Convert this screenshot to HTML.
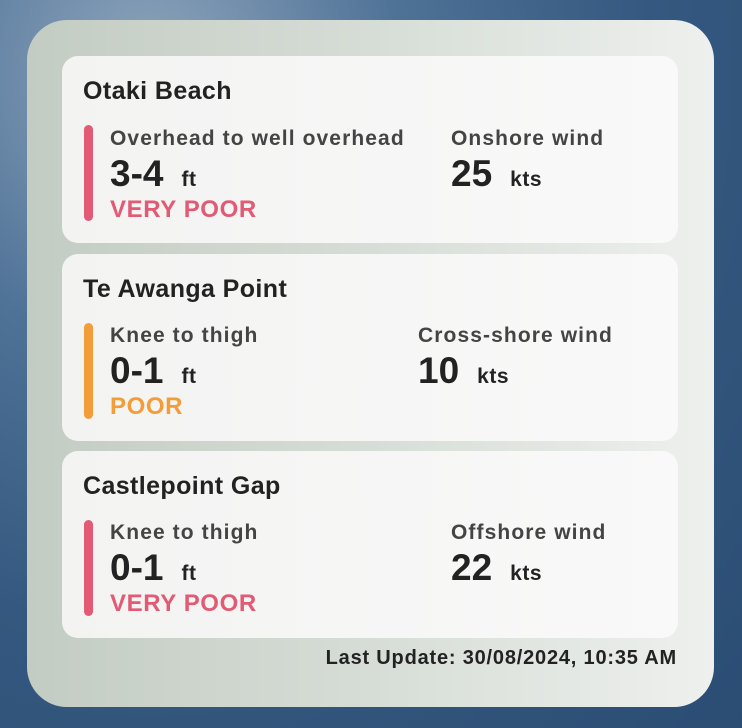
<!DOCTYPE html>
<html><head><meta charset="utf-8"><style>
*{margin:0;padding:0;box-sizing:border-box}
body{width:742px;height:728px;overflow:hidden;position:relative;font-family:"Liberation Sans",sans-serif;
background:radial-gradient(ellipse at 20% 10%,#8fa6bd 0,#4f7297 30%,#34587f 60%,#2b4d74 100%);}
.w{position:absolute;left:27px;top:20px;width:687px;height:687px;border-radius:40px;
background:linear-gradient(90deg,#c3ccc3 0%,#d6ddd6 50%,#eef0ee 100%);}
.c{position:absolute;left:35px;width:616px;height:187px;border-radius:16px;background:linear-gradient(90deg,#f3f3f2,#f9f9f9)}
.t{position:absolute;left:21px;top:21px;font-size:25px;font-weight:bold;color:#222;letter-spacing:0.4px;white-space:nowrap}
.bar{position:absolute;left:22px;top:69px;width:9px;height:96px;border-radius:5px}
.l{position:absolute;font-size:21px;font-weight:bold;color:#444;letter-spacing:1.1px;white-space:nowrap}
.v{position:absolute;font-size:37px;font-weight:bold;color:#222;white-space:nowrap}
.v span{font-size:21px;margin-left:18px;letter-spacing:0.5px}
.r{position:absolute;font-size:24px;font-weight:bold;letter-spacing:0.6px;white-space:nowrap}
.lu{position:absolute;right:37px;top:627px;font-size:20px;font-weight:bold;color:#222;letter-spacing:0.8px;white-space:nowrap}
</style></head><body>
<div class="w">
 <div class="c" style="top:36px">
  <div class="t">Otaki Beach</div>
  <div class="bar" style="background:#e25a73"></div>
  <div class="l" style="left:48px;top:71px">Overhead to well overhead</div>
  <div class="v" style="left:48px;top:97px">3-4<span>ft</span></div>
  <div class="r" style="left:48px;top:140px;color:#e25a73">VERY POOR</div>
  <div class="l" style="left:389px;top:71px">Onshore wind</div>
  <div class="v" style="left:389px;top:97px">25<span>kts</span></div>
 </div>
 <div class="c" style="top:234px">
  <div class="t">Te Awanga Point</div>
  <div class="bar" style="background:#f39c3a"></div>
  <div class="l" style="left:48px;top:70px">Knee to thigh</div>
  <div class="v" style="left:48px;top:96px">0-1<span>ft</span></div>
  <div class="r" style="left:48px;top:139px;color:#f39c3a">POOR</div>
  <div class="l" style="left:356px;top:70px">Cross-shore wind</div>
  <div class="v" style="left:356px;top:96px">10<span>kts</span></div>
 </div>
 <div class="c" style="top:431px">
  <div class="t">Castlepoint Gap</div>
  <div class="bar" style="background:#e25a73"></div>
  <div class="l" style="left:48px;top:70px">Knee to thigh</div>
  <div class="v" style="left:48px;top:96px">0-1<span>ft</span></div>
  <div class="r" style="left:48px;top:139px;color:#e25a73">VERY POOR</div>
  <div class="l" style="left:389px;top:70px">Offshore wind</div>
  <div class="v" style="left:389px;top:96px">22<span>kts</span></div>
 </div>
 <div class="lu">Last Update: 30/08/2024, 10:35 AM</div>
</div>
</body></html>
